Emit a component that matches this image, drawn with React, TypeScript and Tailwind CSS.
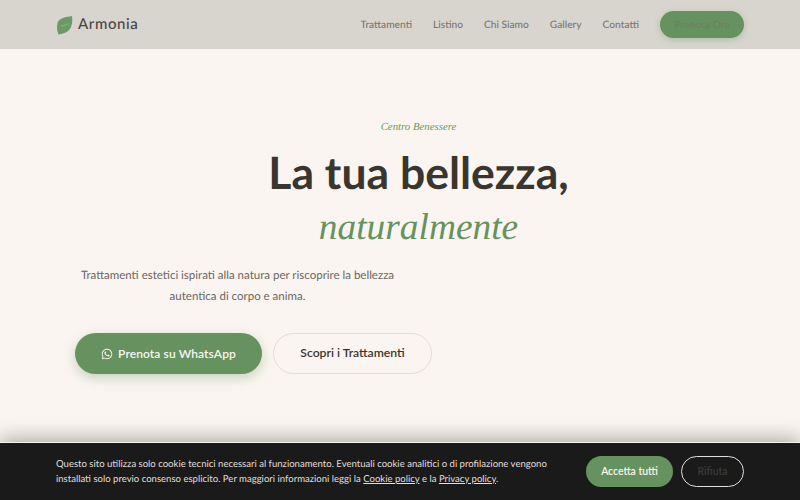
import { FaWhatsapp } from "react-icons/fa";

const links = ["Trattamenti", "Listino", "Chi Siamo", "Gallery", "Contatti"];

function Leaf() {
  return (
    <svg width="17" height="20" viewBox="0 0 17 20" className="shrink-0">
      <path d="M16 1 C10 2 3 3 1.5 8 C0.5 12 1 16 2.5 19.5 C7 19 13 17 15 12 C16.5 8 16.5 4 16 1 Z" fill="#6b9a66" />
      <path d="M5 11 C8 10.5 11 10 13 8.5" stroke="#9dbd98" strokeWidth="0.7" fill="none" />
    </svg>
  );
}

export default function App() {
  return (
    <div className="relative h-[500px] w-[800px] overflow-hidden bg-[#faf5f0] font-['Lato','Noto_Sans',sans-serif] [text-rendering:geometricPrecision]">
      {/* Nav */}
      <nav className="flex h-[49px] items-center justify-between bg-[#d8d5ce] px-14">
        <div className="flex items-center gap-[5px]">
          <Leaf />
          <span className="text-[15px] font-medium tracking-[0.6px] text-[#4a4641]">Armonia</span>
        </div>
        <div className="flex items-center gap-[21px]">
          {links.map((l) => (
            <a key={l} className="pt-[3px] text-[10.2px] font-medium text-[#7a766f]">{l}</a>
          ))}
          <button className="h-[27px] w-[84px] rounded-full bg-[#669260] text-[10.4px] font-medium text-[#6f7f62] shadow-[0_2px_6px_rgba(102,146,96,0.35)]">
            Prenota Ora
          </button>
        </div>
      </nav>

      {/* Hero */}
      <section className="pl-[75px] pt-[68px]">
        <div className="w-[687px] text-center">
          <p className="font-['Liberation_Serif',serif] text-[10.8px] italic leading-5 text-[#6b9a66]">Centro Benessere</p>
          <h1 className="mt-[9px] text-[44.5px] font-bold leading-[54px] text-[#3a352e]">La tua bellezza,</h1>
          <p className="pt-px font-['Liberation_Serif',serif] text-[37.4px] italic leading-[54px] text-[#669260]">naturalmente</p>
        </div>
        <p className="mt-[10px] w-[325px] text-center text-[11.5px] leading-[21px] text-[#6b665f]">
          Trattamenti estetici ispirati alla natura per riscoprire la bellezza autentica di corpo e anima.
        </p>
        <div className="mt-[26px] flex gap-[11px]">
          <button className="flex h-[41px] w-[187px] items-center justify-center gap-[5px] rounded-full bg-[#669260] text-[12px] font-semibold tracking-[0.1px] text-[#faf5f0] shadow-[0_4px_12px_rgba(102,146,96,0.35)]">
            <FaWhatsapp className="text-[12px]" />
            Prenota su WhatsApp
          </button>
          <button className="h-[41px] w-[159px] rounded-full border border-[#e6ddd0] text-[12.2px] font-semibold text-[#3a352e]">
            Scopri i Trattamenti
          </button>
        </div>
      </section>

      {/* Cookie banner */}
      <div className="absolute inset-x-0 bottom-0 flex h-[58px] items-center justify-between border-t border-[#f5f2ee] bg-[#1a1a1a] px-14 shadow-[0_-4px_20px_rgba(0,0,0,0.3)]">
        <p className="w-[500px] text-[9.55px] leading-[15px] text-[#e2dfda]">
          Questo sito utilizza solo cookie tecnici necessari al funzionamento. Eventuali cookie analitici o di profilazione vengono<br />
          installati solo previo consenso esplicito. Per maggiori informazioni leggi la <u>Cookie policy</u> e la <u>Privacy policy</u>.
        </p>
        <div className="flex items-center gap-2">
          <button className="h-[31px] w-[87px] rounded-full bg-[#669260] text-[10.4px] font-semibold text-[#faf5f0]">Accetta tutti</button>
          <button className="h-[31px] w-[63px] rounded-full border border-[#e2dfda] text-[10.4px] font-semibold text-[#3a3a38]">Rifiuta</button>
        </div>
      </div>
    </div>
  );
}
